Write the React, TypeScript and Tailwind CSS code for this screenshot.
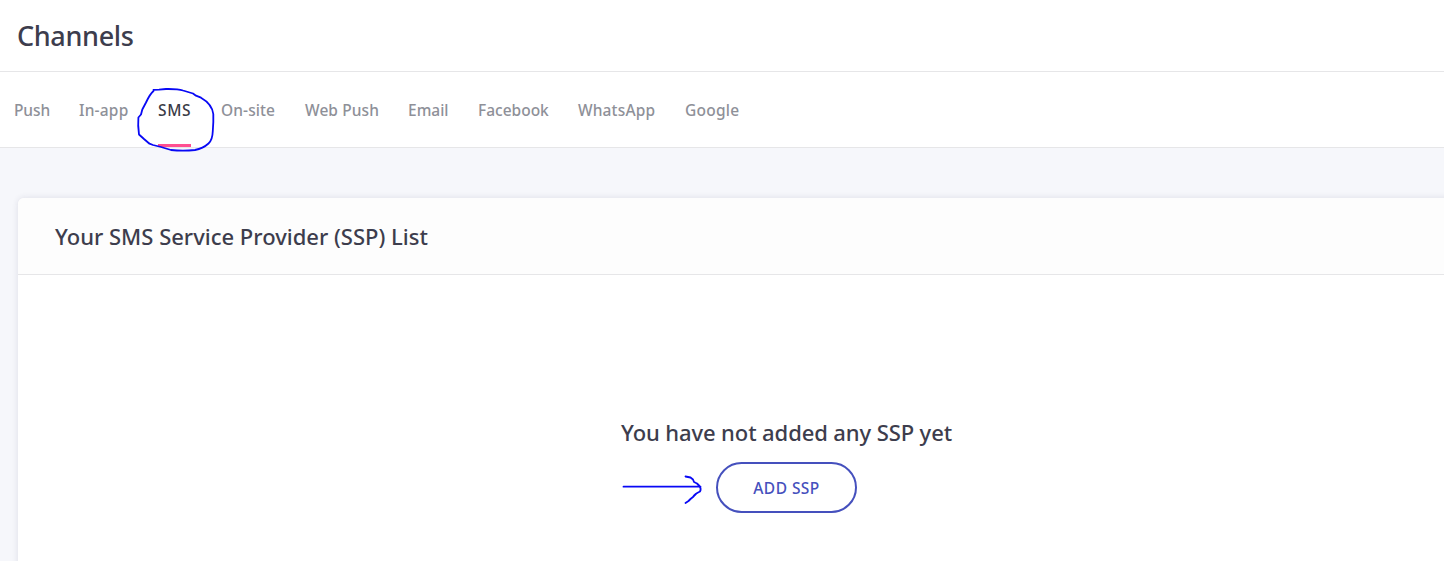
const tabs = [
  { label: 'Push', size: 'w-[35px] tracking-[-0.1px]' },
  { label: 'In-app', size: 'w-[49px] tracking-[0.2px]' },
  { label: 'SMS', size: 'w-[33px] tracking-[0.6px]', active: true },
  { label: 'On-site', size: 'w-[54px] tracking-[0.1px]' },
  { label: 'Web Push', size: 'w-[73px] tracking-[0.1px]' },
  { label: 'Email', size: 'w-[40px] tracking-[0px]' },
  { label: 'Facebook', size: 'w-[70px] tracking-[0px]' },
  { label: 'WhatsApp', size: 'w-[77px] tracking-[0.15px]' },
  { label: 'Google', size: 'w-[54px] tracking-[0.25px]' },
];

function TabBar() {
  return (
    <nav className="flex h-[76px] gap-[30px] border-b border-[#e6e6e8] bg-white pl-[14px] text-[15.5px] font-medium whitespace-nowrap">
      {tabs.map((tab) => (
        <a
          key={tab.label}
          className={`relative flex h-full shrink-0 items-center ${tab.size} ${tab.active ? 'text-[#3a3a46]' : 'text-[#8e9098]'}`}
        >
          <span className="pt-px leading-5">{tab.label}</span>
          {tab.active && <span className="absolute bottom-0 left-0 h-[3px] w-full bg-[#ff4f91]" />}
          {tab.active && (
            <svg
              className="pointer-events-none absolute top-[14px] -left-[23px] z-10"
              width="82"
              height="68"
              viewBox="0 0 82 68"
              fill="none"
              stroke="#0808f5"
              strokeWidth="1.8"
              strokeLinejoin="round"
              strokeLinecap="round"
            >
              <path d="M18.5 3.8L24 3.6L31 3Q43 2.8 48 4.5L58 7.5L61 9.7L66 11.7Q77 18 78.3 28Q78.6 36 77.8 45Q77.5 54 73.5 57.5Q68 62.5 60 64Q48 65.3 36 64L26 61L18 59L14.5 57.7L9 53L4 48.5Q2.7 39 3.4 31.5L6 28.5L7.3 23.5L11 16.5Q15 8 18.5 5" />
            </svg>
          )}
        </a>
      ))}
    </nav>
  );
}

function EmptyState() {
  return (
    <div className="flex h-[340px] flex-col items-center pt-[140px]">
      <p className="text-[22px] leading-[34px] font-medium tracking-[-0.1px]">You have not added any SSP yet</p>
      <div className="relative mt-[13px]">
        <button className="flex h-[51px] w-[141px] items-center justify-center rounded-full border-2 border-[#4550bd] bg-white pt-[3px] text-[15.5px] font-medium tracking-[0.45px] text-[#4550bd]">
          ADD SSP
        </button>
        <svg
          className="absolute top-[10px] -left-[95px]"
          width="82"
          height="36"
          viewBox="0 0 82 36"
          fill="none"
          stroke="#0808f5"
          strokeWidth="1.8"
          strokeLinejoin="round"
          strokeLinecap="round"
        >
          <path d="M2.5 14.7H79.5M64.5 4.5L69.5 5.5L72 7.5L73 10L76 11.5L78.5 14Q80.5 17 79 19.5Q74 21.5 72 25L69.5 27L67.5 29L64.5 31" />
        </svg>
      </div>
    </div>
  );
}

export default function App() {
  return (
    <div className="h-[561px] w-full overflow-hidden bg-[#f6f7fb] font-['Noto_Sans','Open_Sans',sans-serif] text-[#3d3d4d]">
      <header className="flex h-[72px] items-center border-b border-[#e6e6e8] bg-white pl-[17px]">
        <h1 className="text-[27px] leading-9 font-medium tracking-[-0.35px]">Channels</h1>
      </header>
      <TabBar />
      <main className="pt-[50px] pl-[18px]">
        <section className="w-[1537px] overflow-hidden rounded-[6px] bg-white shadow-[0_0_6px_rgba(40,40,80,0.12)]">
          <div className="flex h-[77px] items-center border-b border-[#e6e6e8] bg-[#fdfdfd] pl-[37px]">
            <h2 className="text-[22px] leading-8 font-medium">Your SMS Service Provider (SSP) List</h2>
          </div>
          <EmptyState />
        </section>
      </main>
    </div>
  );
}
